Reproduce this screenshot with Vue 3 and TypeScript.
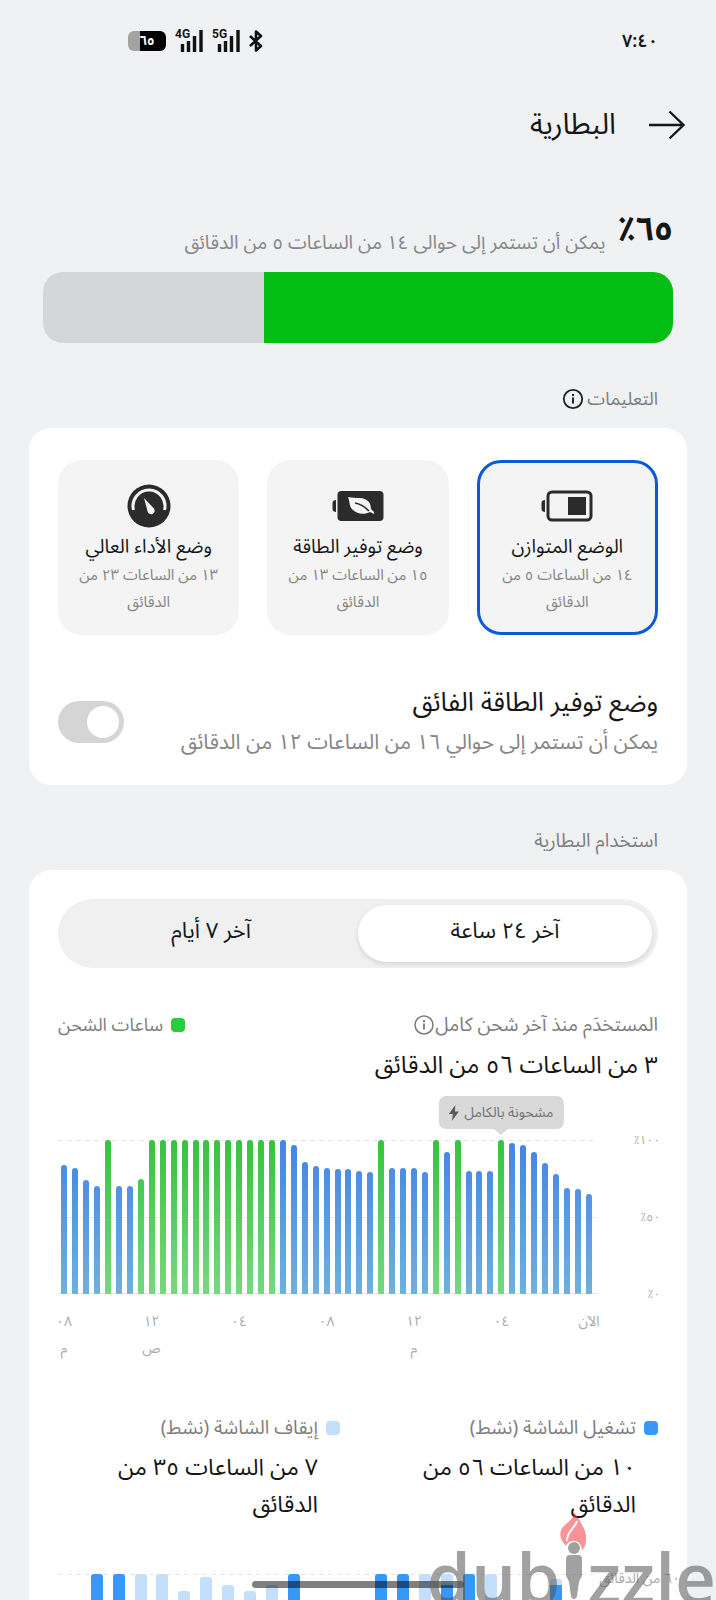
<script setup lang="ts">
import { ref } from 'vue'

type Mode = { id: string; title: string; detail: string }
type Bar = { level: number; charging: boolean }
type Slot = { on: number; off: number }

const modes: Mode[] = [
  { id: 'balanced', title: 'الوضع المتوازن', detail: '١٤ من الساعات ٥ من الدقائق' },
  { id: 'saver', title: 'وضع توفير الطاقة', detail: '١٥ من الساعات ١٣ من الدقائق' },
  { id: 'performance', title: 'وضع الأداء العالي', detail: '١٣ من الساعات ٢٣ من الدقائق' },
]
const mode = ref('balanced')
const ultraSaver = ref(false)
const range = ref('day')
const charge = 65

const levels = [
  84, 82, 74, 70, 100, 70, 70, 75, 100, 100, 100, 100, 100, 100, 100, 100, 100, 100, 100, 100, 100, 97, 86, 83, 82,
  81, 81, 80, 79, 100, 82, 82, 82, 79, 100, 92, 100, 80, 80, 80, 100, 98, 97, 92, 85, 78, 69, 68, 65,
]
const chargingAt = new Set([4, 7, 8, 9, 10, 11, 12, 13, 14, 15, 16, 17, 18, 19, 29, 34, 36, 40])
const bars: Bar[] = levels.map((level, i) => ({ level, charging: chargingAt.has(i) }))

const hours = [
  { hour: '٠٨', period: 'م' },
  { hour: '١٢', period: 'ص' },
  { hour: '٠٤', period: '' },
  { hour: '٠٨', period: '' },
  { hour: '١٢', period: 'م' },
  { hour: '٠٤', period: '' },
  { hour: 'الآن', period: '' },
]

const slots: Slot[] = [
  { on: 0, off: 0 },
  { on: 100, off: 0 },
  { on: 100, off: 0 },
  { on: 0, off: 100 },
  { on: 0, off: 100 },
  { on: 0, off: 89 },
  { on: 0, off: 98 },
  { on: 0, off: 93 },
  { on: 0, off: 89 },
  { on: 0, off: 93 },
  { on: 100, off: 0 },
  { on: 0, off: 0 },
  { on: 0, off: 0 },
  { on: 0, off: 0 },
  { on: 100, off: 0 },
  { on: 100, off: 0 },
  { on: 0, off: 100 },
  { on: 93, off: 7 },
  { on: 100, off: 0 },
  { on: 0, off: 100 },
  { on: 0, off: 0 },
  { on: 0, off: 0 },
  { on: 93, off: 4 },
  { on: 0, off: 0 },
]
</script>

<template>
  <div class="screen" dir="rtl">
    <div class="status">
      <span class="clock">٧:٤٠</span>
      <div class="indicators" dir="ltr">
        <span class="cell">٦٥</span>
        <span v-for="net in ['4G', '5G']" :key="net" class="signal">
          <span class="net">{{ net }}</span>
          <svg width="28" height="22" viewBox="0 0 28 22" aria-hidden="true">
            <path d="M7.500 14v8M13.500 11v11M19.500 6v16M26 0v22" stroke="#111" stroke-width="3.400" />
          </svg>
        </span>
        <svg class="bt" width="14" height="22" viewBox="0 0 14 22" aria-hidden="true">
          <path d="M1 6l11 10-5 4.500V1.500L12 6 1 16" fill="none" stroke="#111" stroke-width="2.600" stroke-linejoin="round" />
        </svg>
      </div>
    </div>

    <header class="topbar">
      <button class="back" type="button" aria-label="رجوع">
        <svg width="36" height="30" viewBox="0 0 36 30" aria-hidden="true">
          <path d="M0 15h34M20.500 1.500L34.500 15 20.500 28.500" fill="none" stroke="#161616" stroke-width="2.400" />
        </svg>
      </button>
      <h1>البطارية</h1>
    </header>

    <main>
      <section class="summary">
        <div class="remaining">
          <strong>٦٥٪</strong>
          <span>يمكن أن تستمر إلى حوالى ١٤ من الساعات ٥ من الدقائق</span>
        </div>
        <div class="gauge"><div class="gauge-fill" :style="{ width: charge + '%' }"></div></div>
      </section>

      <div class="section-title tips">
        <h2>التعليمات</h2>
        <button class="info dark" type="button" aria-label="معلومات">
          <svg width="22" height="22" viewBox="0 0 22 22" aria-hidden="true">
            <circle cx="11" cy="11" r="9.200" fill="none" stroke="currentColor" stroke-width="1.800" />
            <path d="M11 9.500v6M11 6v2" stroke="currentColor" stroke-width="2" />
          </svg>
        </button>
      </div>

      <section class="card modes-card">
        <div class="modes">
          <label v-for="m in modes" :key="m.id" class="mode" :class="{ active: mode === m.id }">
            <input v-model="mode" class="hidden-input" type="radio" name="mode" :value="m.id" />
            <svg v-if="m.id === 'balanced'" width="52" height="44" viewBox="0 0 52 44" aria-hidden="true">
              <path d="M4 16v12c-2 0-3.500-1-3.500-3v-6c0-2 1.500-3 3.500-3z" fill="#2b2b2b" />
              <rect x="7" y="8" width="43" height="28" rx="4" fill="none" stroke="#2b2b2b" stroke-width="3" />
              <path d="M27 13h18v18H27z" fill="#2b2b2b" />
            </svg>
            <svg v-else-if="m.id === 'saver'" width="52" height="44" viewBox="0 0 52 44" aria-hidden="true">
              <path d="M4 16v12c-2 0-3.500-1-3.500-3v-6c0-2 1.500-3 3.500-3z" fill="#2b2b2b" />
              <rect x="5.500" y="7" width="46" height="30" rx="4" fill="#2b2b2b" />
              <path d="M16 13c8 2 16-1 21 5 2 3 2 7 2 7l3 3v2l-4-2c-6 3-13 2-17-2-4-3-3-8-5-13z" fill="#f4f4f4" />
              <path d="M23 19c6 1 10 4 14 8" fill="none" stroke="#2b2b2b" stroke-width="1.600" />
            </svg>
            <svg v-else width="44" height="44" viewBox="0 0 44 44" aria-hidden="true">
              <circle cx="22" cy="22" r="21.500" fill="#2b2b2b" />
              <path d="M6.500 26a16 16 0 1 1 31 0" fill="none" stroke="#f4f4f4" stroke-width="3" />
              <path d="M17 14l9.500 10a3.600 3.600 0 1 1-6 3z" fill="#f4f4f4" />
            </svg>
            <span class="mode-title">{{ m.title }}</span>
            <span class="mode-detail">{{ m.detail }}</span>
          </label>
        </div>
        <label class="ultra">
          <span class="ultra-text">
            <span class="ultra-title">وضع توفير الطاقة الفائق</span>
            <span class="ultra-detail">يمكن أن تستمر إلى حوالي ١٦ من الساعات ١٢ من الدقائق</span>
          </span>
          <input v-model="ultraSaver" class="switch" type="checkbox" role="switch" />
        </label>
      </section>

      <div class="section-title usage-title"><h2>استخدام البطارية</h2></div>

      <section class="card usage">
        <div class="segments">
          <button type="button" :class="{ selected: range === 'day' }" @click="range = 'day'">آخر ٢٤ ساعة</button>
          <button type="button" :class="{ selected: range === 'week' }" @click="range = 'week'">آخر ٧ أيام</button>
        </div>

        <div class="since">
          <div class="since-label">
            <span>المستخدَم منذ آخر شحن كامل</span>
            <button class="info" type="button" aria-label="معلومات">
              <svg width="22" height="22" viewBox="0 0 22 22" aria-hidden="true">
                <circle cx="11" cy="11" r="9" fill="none" stroke="currentColor" stroke-width="1.500" />
                <path d="M11 9.500v6M11 6v2" stroke="currentColor" stroke-width="1.800" />
              </svg>
            </button>
          </div>
          <div class="key"><i class="dot green"></i><span>ساعات الشحن</span></div>
        </div>
        <p class="figure">٣ من الساعات ٥٦ من الدقائق</p>

        <div class="chart" dir="ltr">
          <div class="plot">
            <div class="bars">
              <div v-for="(b, i) in bars" :key="i" class="slot">
                <div class="bar" :class="{ charging: b.charging }" :style="{ height: b.level + '%' }"></div>
                <div v-if="i === 40" class="tip" dir="rtl">
                  <span>مشحونة بالكامل</span>
                  <svg width="10" height="16" viewBox="0 0 10 16" aria-hidden="true">
                    <path d="M6.500 0L0 9h4L3 16l7-9.500H6z" fill="#5a5a5a" />
                  </svg>
                </div>
              </div>
            </div>
            <div class="hours">
              <div v-for="(h, i) in hours" :key="i" class="hour">
                <span>{{ h.hour }}</span>
                <span>{{ h.period }}</span>
              </div>
            </div>
          </div>
          <div class="scale" dir="rtl"><span>١٠٠٪</span><span>٥٠٪</span><span>٠٪</span></div>
        </div>

        <div class="totals">
          <div class="total">
            <div class="total-label"><i class="dot blue"></i><span>تشغيل الشاشة (نشط)</span></div>
            <p class="figure">١٠ من الساعات ٥٦ من الدقائق</p>
          </div>
          <div class="total">
            <div class="total-label"><i class="dot pale"></i><span>إيقاف الشاشة (نشط)</span></div>
            <p class="figure">٧ من الساعات ٣٥ من الدقائق</p>
          </div>
        </div>

        <div class="chart activity" dir="ltr">
          <div class="plot">
            <div class="bars">
              <div v-for="(s, i) in slots" :key="i" class="slot">
                <div class="stack" :style="{ height: s.on + s.off + '%' }">
                  <div class="off" :style="{ flexGrow: s.off }"></div>
                  <div class="on" :style="{ flexGrow: s.on }"></div>
                </div>
              </div>
            </div>
          </div>
          <div class="scale" dir="rtl"><span>٦٠ من الدقائق</span></div>
        </div>
      </section>
    </main>

    <div class="home-bar"></div>
    <div class="brand" dir="ltr">
      <span>dub</span>
      <svg width="27" height="88" viewBox="0 0 27 88" aria-hidden="true">
        <path d="M14 0c8 12 15 21 11 34l-3 5c0-7-4-10-8-10s-7 2-8 5C-3 24 0 17 6 12c5-4 8-7 8-12z" fill="#f23c41" />
        <path d="M17 9c-2 8-10 9-10 20" fill="none" stroke="#fff" stroke-width="2" />
        <circle cx="14" cy="36" r="6" fill="#555" />
        <path d="M6 47q0-4 4-4h8q4 0 4 4v15c0 4-2 4-3 8l-2 14c-.500 4-5.500 4-6 0L9 70c-1-4-3-4-3-8z" fill="#555" />
      </svg>
      <span>zzle</span>
    </div>
  </div>
</template>

<style>
html,
body {
  background: #eff1f3;
}
</style>

<style scoped>
.screen {
  height: 100vh;
  overflow: hidden;
  background: #eff1f3;
  color: #161616;
  font-family: "Noto Sans Arabic", "Noto Sans", "DejaVu Sans", sans-serif;
}
h1,
h2,
p {
  margin: 0;
  font-weight: 400;
}
button {
  font: inherit;
  color: inherit;
  border: 0;
  padding: 0;
  background: none;
}
svg {
  display: block;
  flex: none;
}
.status {
  height: 82px;
  padding: 0 58px 0 128px;
  display: flex;
  align-items: center;
  justify-content: space-between;
}
.clock {
  font-size: 18px;
  font-weight: 600;
  line-height: 24px;
}
.indicators {
  display: flex;
  align-items: center;
  gap: 9px;
}
.cell {
  width: 38px;
  height: 20px;
  border-radius: 6px;
  background: linear-gradient(90deg, #a3a3a3 12px, #000 12px);
  color: #fff;
  font-size: 13px;
  font-weight: 700;
  line-height: 20px;
  text-align: center;
}
.signal {
  position: relative;
}
.net {
  position: absolute;
  left: 0;
  top: -2px;
  font-family: Roboto, sans-serif;
  font-size: 12px;
  font-weight: 700;
  line-height: 12px;
}
.topbar {
  height: 86px;
  padding: 0 31px;
  display: flex;
  align-items: center;
  gap: 33px;
}
h1 {
  font-size: 29px;
  line-height: 40px;
}
.summary {
  padding: 30px 43px 0;
}
.remaining {
  display: flex;
  align-items: flex-end;
  gap: 12px;
  height: 62px;
  margin-bottom: 12px;
}
.remaining strong {
  font-size: 33px;
  line-height: 60px;
}
.remaining span {
  font-size: 19px;
  line-height: 34px;
  color: #868789;
}
.gauge {
  height: 71px;
  border-radius: 20px;
  background: #d5d6d8;
  overflow: hidden;
}
.gauge-fill {
  height: 100%;
  background: #03bf14;
}
.section-title {
  height: 85px;
  box-sizing: border-box;
  padding: 26px 58px 0;
  display: flex;
  align-items: center;
  gap: 3px;
}
h2 {
  font-size: 18px;
  line-height: 30px;
  color: #7d7e80;
}
.usage-title h2 {
  font-size: 19px;
}
.info {
  color: #7a7a7a;
}
.info.dark {
  color: #222;
}
.card {
  margin: 0 29px;
  padding: 32px 29px;
  border-radius: 22px;
  background: #fff;
}
.modes-card {
  padding-bottom: 24px;
}
.modes {
  display: grid;
  grid-template-columns: repeat(3, 1fr);
  gap: 28px;
}
.mode {
  box-sizing: border-box;
  min-height: 175px;
  padding: 21px 14px 11px;
  border: 3px solid #f4f4f4;
  border-radius: 24px;
  background: #f4f4f4;
  display: flex;
  flex-direction: column;
  align-items: center;
  text-align: center;
}
.mode.active {
  border-color: #0a5cd6;
}
.hidden-input {
  position: absolute;
  opacity: 0;
}
.mode-title {
  margin-top: 4px;
  font-size: 19px;
  line-height: 30px;
  white-space: nowrap;
}
.mode-detail {
  font-size: 15px;
  line-height: 27px;
  color: #858585;
}
.ultra {
  margin-top: 48px;
  display: flex;
  align-items: center;
  justify-content: space-between;
}
.ultra-text {
  display: flex;
  flex-direction: column;
}
.ultra-title {
  font-size: 26px;
  line-height: 40px;
}
.ultra-detail {
  font-size: 21px;
  line-height: 38px;
  color: #858585;
}
.switch {
  appearance: none;
  flex: none;
  box-sizing: border-box;
  width: 66px;
  height: 42px;
  margin: 0;
  padding: 5px;
  border-radius: 21px;
  background: #d5d5d5;
  display: flex;
}
.switch::before {
  content: "";
  width: 32px;
  height: 32px;
  border-radius: 50%;
  background: #fff;
}
.switch:checked {
  background: #0a5cd6;
  justify-content: flex-end;
}
.usage {
  padding-top: 29px;
}
.segments {
  display: flex;
  padding: 6px;
  border-radius: 35px;
  background: #f0f0f0;
}
.segments button {
  flex: 1;
  height: 57px;
  padding-bottom: 5px;
  border-radius: 29px;
  font-size: 22px;
  line-height: 32px;
}
.segments .selected {
  background: #fff;
  box-shadow: 0 2px 5px rgba(0, 0, 0, 0.12);
}
.since {
  margin-top: 42px;
  display: flex;
  justify-content: space-between;
  font-size: 19px;
  line-height: 30px;
  color: #7d7d7d;
}
.since-label,
.key,
.total-label {
  display: flex;
  align-items: center;
}
.key,
.total-label {
  gap: 8px;
}
.key {
  font-size: 18px;
}
.dot {
  width: 14px;
  height: 14px;
  border-radius: 4px;
  flex: none;
}
.green {
  background: #28cc3c;
}
.blue {
  background: #3898f8;
}
.pale {
  background: #c3dffc;
}
.figure {
  font-size: 24px;
  line-height: 37px;
}
.since + .figure {
  margin-top: 7px;
}
.chart {
  display: flex;
  justify-content: space-between;
  margin-top: 56px;
}
.plot {
  width: 90%;
}
.bars {
  height: 154px;
  padding: 0 4px 0 1px;
  display: flex;
  background:
    repeating-linear-gradient(90deg, #e6e6e6 0 5px, transparent 5px 9px) top / 100% 1px no-repeat,
    linear-gradient(#ececec, #ececec) center / 100% 1px no-repeat,
    linear-gradient(#e6e6e6, #e6e6e6) bottom / 100% 1px no-repeat;
}
.slot {
  position: relative;
  flex: 1;
  display: flex;
  justify-content: center;
  align-items: flex-end;
}
.bar {
  width: 6px;
  border-radius: 3px 3px 0 0;
  background: linear-gradient(#4484e6, #6fb0dc) bottom / 100% 154px;
}
.bar.charging {
  background-image: linear-gradient(#36c23e, #78d880);
}
.tip {
  position: absolute;
  bottom: calc(100% + 11px);
  left: 50%;
  transform: translateX(-50%);
  box-sizing: border-box;
  height: 33px;
  padding: 0 10px;
  border-radius: 7px;
  background: #d9d9d9;
  color: #747474;
  display: flex;
  align-items: center;
  gap: 5px;
  font-size: 14px;
  line-height: 24px;
  white-space: nowrap;
}
.tip::after {
  content: "";
  position: absolute;
  top: 100%;
  left: 50%;
  margin-left: -7px;
  border: 7px solid transparent;
  border-top: 6px solid #d9d9d9;
  border-bottom: 0;
}
.hours {
  margin: 14px -13px 0 -16px;
  display: flex;
  justify-content: space-between;
}
.hour {
  width: 44px;
  display: flex;
  flex-direction: column;
  text-align: center;
  font-size: 14px;
  line-height: 27px;
  color: #ababab;
}
.hour span {
  min-height: 27px;
}
.scale {
  height: 174px;
  margin: -9px -2px 0 0;
  display: flex;
  flex-direction: column;
  justify-content: space-between;
  font-size: 12px;
  line-height: 20px;
  color: #ababab;
  white-space: nowrap;
}
.totals {
  margin-top: 51px;
  display: grid;
  grid-template-columns: 290px 1fr;
  column-gap: 28px;
  font-size: 19px;
  line-height: 30px;
  color: #7d7d7d;
}
.total .figure {
  margin: 6px 22px 0;
  color: #161616;
  max-width: 224px;
  font-size: 23px;
}
.activity {
  margin-top: 51px;
}
.activity .plot {
  flex: none;
}
.activity .bars {
  padding: 0 9px 0 6px;
}
.stack {
  width: 12px;
  border-radius: 3px 3px 0 0;
  overflow: hidden;
  display: flex;
  flex-direction: column;
}
.on {
  flex-basis: 0;
  background: #3898f8;
}
.off {
  flex-basis: 0;
  background: #c3dffc;
}
.activity .scale {
  margin: -5px -22px 0 -80px;
  font-size: 14px;
}
.home-bar {
  position: fixed;
  bottom: 12px;
  left: 50%;
  width: 212px;
  height: 7px;
  margin-left: -106px;
  border-radius: 4px;
  background: rgba(0, 0, 0, 0.5);
}
.brand {
  position: fixed;
  right: 0;
  bottom: 0;
  display: flex;
  align-items: flex-end;
  opacity: 0.55;
  color: #555;
  font-family: "Open Sans", sans-serif;
  font-size: 71px;
  font-weight: 600;
  line-height: 46px;
}
</style>
